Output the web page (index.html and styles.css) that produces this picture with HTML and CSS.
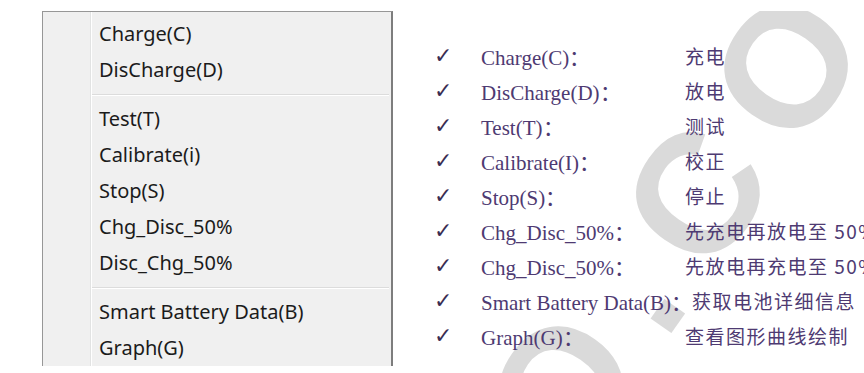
FILE: index.html
```html
<!DOCTYPE html>
<html lang="zh-CN">
<head>
    <meta charset="UTF-8">
    <meta name="viewport" content="width=device-width, initial-scale=1.0">
    <title>Menu</title>
    <link rel="stylesheet" href="styles.css">
</head>
<body>
    <div class="page">
        <div class="menu">
            <div class="menu-item">Charge(C)</div>
            <div class="menu-item">DisCharge(D)</div>
            <div class="menu-sep"></div>
            <div class="menu-item">Test(T)</div>
            <div class="menu-item">Calibrate(i)</div>
            <div class="menu-item">Stop(S)</div>
            <div class="menu-item">Chg_Disc_50%</div>
            <div class="menu-item">Disc_Chg_50%</div>
            <div class="menu-sep"></div>
            <div class="menu-item">Smart Battery Data(B)</div>
            <div class="menu-item">Graph(G)</div>
        </div>

        <div class="notes">
            <div class="watermark">CO.COM</div>
            <ul class="note-list">
                <li><span class="tick">✓</span><span class="key">Charge(C)：</span><span class="desc">充电</span></li>
                <li><span class="tick">✓</span><span class="key">DisCharge(D)：</span><span class="desc">放电</span></li>
                <li><span class="tick">✓</span><span class="key">Test(T)：</span><span class="desc">测试</span></li>
                <li><span class="tick">✓</span><span class="key">Calibrate(I)：</span><span class="desc">校正</span></li>
                <li><span class="tick">✓</span><span class="key">Stop(S)：</span><span class="desc">停止</span></li>
                <li><span class="tick">✓</span><span class="key">Chg_Disc_50%：</span><span class="desc">先充电再放电至 50%</span></li>
                <li><span class="tick">✓</span><span class="key">Chg_Disc_50%：</span><span class="desc">先放电再充电至 50%</span></li>
                <li><span class="tick">✓</span><span class="key">Smart Battery Data(B)：</span><span class="desc">获取电池详细信息</span></li>
                <li><span class="tick">✓</span><span class="key">Graph(G)：</span><span class="desc">查看图形曲线绘制</span></li>
            </ul>
        </div>
    </div>
</body>
</html>
```

FILE: styles.css
```css
body {
    margin: 0;
    background: #ffffff;
    overflow: hidden;
}

.page {
    display: flex;
    align-items: flex-start;
    height: 373px;
    padding-left: 42px;
    padding-top: 11px;
    box-sizing: border-box;
}

/* context menu */
.menu {
    flex-shrink: 0;
    width: 351px;
    height: 355px;
    padding-top: 4px;
    box-sizing: border-box;
    background: linear-gradient(to right, #f0f0f0 0, #f0f0f0 47px, #e2e3e3 47px, #e2e3e3 48px, #ffffff 48px, #ffffff 49px, #f0f0f0 49px);
    border: 1px solid #979797;
    border-bottom: none;
    border-right: 2px solid #7d7d7d;
    font-family: "Noto Sans", sans-serif;
    font-size: 20px;
    color: #1b1b1b;
}

.menu-item {
    height: 36px;
    line-height: 36px;
    padding-left: 56px;
}

.menu-sep {
    height: 13px;
    margin-left: 49px;
    margin-right: 2px;
    display: flex;
    flex-direction: column;
    justify-content: center;
}

.menu-sep::before {
    content: "";
    display: block;
    height: 1px;
    background: #dcdcdc;
    border-bottom: 1px solid #ffffff;
}

/* description list */
.notes {
    position: relative;
    flex: 1;
    min-width: 0;
    height: 362px;
    overflow: hidden;
}

.watermark {
    position: absolute;
    left: -27px;
    top: 507px;
    font-family: "Liberation Sans", sans-serif;
    font-weight: bold;
    font-size: 170px;
    letter-spacing: 30px;
    line-height: 1;
    color: #dadada;
    white-space: nowrap;
    transform: rotate(-55deg);
    transform-origin: 0 0;
}

.note-list {
    position: relative;
    list-style: none;
    margin: 27px 0 0 0;
    padding: 0 0 0 41px;
}

.note-list li {
    display: flex;
    align-items: center;
    height: 35px;
    font-family: "Liberation Serif", serif;
    font-size: 21px;
    color: #4e3a72;
}

.tick {
    flex-shrink: 0;
    width: 47px;
    font-family: "DejaVu Sans", sans-serif;
    font-size: 22px;
    font-weight: bold;
    color: #3a2d52;
}

.key {
    flex-shrink: 0;
    min-width: 204px;
    white-space: nowrap;
}

.desc {
    flex-shrink: 0;
    font-family: "Noto Sans CJK SC", sans-serif;
    font-size: 19px;
    letter-spacing: 1.5px;
    white-space: nowrap;
}
```
